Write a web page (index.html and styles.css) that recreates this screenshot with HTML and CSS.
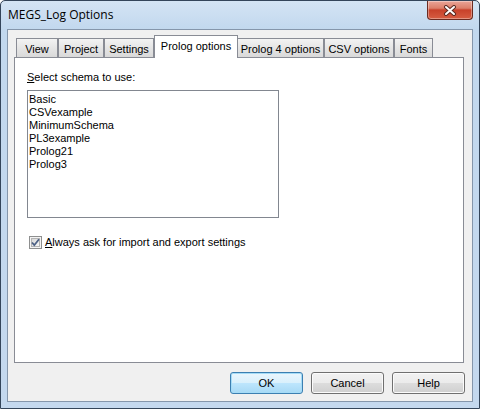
FILE: index.html
```html
<!DOCTYPE html>
<html lang="en">
<head>
  <meta charset="UTF-8">
  <title>MEGS_Log Options</title>
  <link rel="stylesheet" href="styles.css">
</head>
<body>

  <div class="window">
    <div class="titlebar">
      <span class="title">MEGS_Log Options</span>
      <div class="close-btn">
        <svg width="14" height="11" viewBox="0 0 14 11">
          <path d="M3 2 L11 9 M11 2 L3 9" stroke="#5a2a22" stroke-width="4" stroke-linecap="round"/>
          <path d="M3 2 L11 9 M11 2 L3 9" stroke="#ffffff" stroke-width="2" stroke-linecap="round"/>
        </svg>
      </div>
    </div>

    <div class="client">
      <div class="tabs">
        <div class="tab tab-view">View</div>
        <div class="tab tab-project">Project</div>
        <div class="tab tab-settings">Settings</div>
        <div class="tab tab-prolog active">Prolog options</div>
        <div class="tab tab-prolog4">Prolog 4 options</div>
        <div class="tab tab-csv">CSV options</div>
        <div class="tab tab-fonts">Fonts</div>
      </div>

      <div class="panel">
        <div class="label"><u>S</u>elect schema to use:</div>
        <div class="listbox">
          <div class="item">Basic</div>
          <div class="item">CSVexample</div>
          <div class="item">MinimumSchema</div>
          <div class="item">PL3example</div>
          <div class="item">Prolog21</div>
          <div class="item">Prolog3</div>
        </div>
        <div class="check-row">
          <svg class="checkbox" width="13" height="13" viewBox="0 0 13 13">
            <defs>
              <linearGradient id="cbfill" x1="0" y1="0" x2="1" y2="1">
                <stop offset="0" stop-color="#d6d6d6"/>
                <stop offset="1" stop-color="#f8f8f8"/>
              </linearGradient>
            </defs>
            <rect x="0.5" y="0.5" width="12" height="12" fill="#f4f4f4" stroke="#8e8f8f"/>
            <rect x="2.5" y="2.5" width="8" height="8" fill="url(#cbfill)" stroke="#b4b4b4"/>
            <path d="M3 6.5 L5.3 9.2 L10 3.2" fill="none" stroke="#4d6185" stroke-width="1.8"/>
          </svg>
          <span><u>A</u>lways ask for import and export settings</span>
        </div>
      </div>

      <div class="buttons">
        <div class="btn default">OK</div>
        <div class="btn">Cancel</div>
        <div class="btn">Help</div>
      </div>
    </div>
  </div>

</body>
</html>
```

FILE: styles.css
```css
* {
  box-sizing: border-box;
}

body {
  margin: 0;
  font-family: "Liberation Sans", Arial, sans-serif;
  font-size: 11px;
  color: #000;
}

.window {
  width: 480px;
  height: 409px;
  border: 1px solid #34455a;
  border-radius: 5px 5px 0 0;
  background: linear-gradient(to bottom, #d4e4f4 0%, #c2d8ee 28px, #c4d8ee 100%);
  padding: 0 6px 6px;
  display: flex;
  flex-direction: column;
}

.titlebar {
  height: 28px;
  display: flex;
  justify-content: space-between;
  align-items: flex-start;
}

.title {
  font-family: "Open Sans", "Noto Sans", sans-serif;
  font-size: 12px;
  line-height: 16px;
  padding: 6px 0 0 1px;
  color: #000;
}

.close-btn {
  width: 46px;
  height: 19px;
  border: 1px solid #6b2b21;
  border-top: none;
  border-radius: 0 0 4px 4px;
  background: linear-gradient(to bottom, #eaa598 0%, #dc7f6a 40%, #c8412a 50%, #d65d42 100%);
  box-shadow: inset 0 0 0 1px rgba(255, 255, 255, 0.35);
  display: flex;
  align-items: center;
  justify-content: center;
}

.client {
  flex: 1;
  border: 1px solid #8596ab;
  background: #f0f0f0;
  padding: 5px 7px 7px 6px;
  display: flex;
  flex-direction: column;
}

.tabs {
  height: 22px;
  display: flex;
  align-items: flex-end;
  padding-left: 2px;
}

.tab {
  height: 19px;
  line-height: 20px;
  text-align: center;
  border: 1px solid #898c95;
  border-bottom: none;
  background: linear-gradient(to bottom, #f3f3f3, #e4e4e4 55%, #d9d9d9);
  white-space: nowrap;
}

.tab.active {
  height: 23px;
  line-height: 21px;
  margin-bottom: -1px;
  margin-right: -1px;
  background: #fff;
  position: relative;
  z-index: 1;
}

.tab-view { width: 42px; }
.tab-project { width: 46px; }
.tab-settings { width: 50px; }
.tab-prolog { width: 84px; }
.tab-prolog4 { width: 87px; }
.tab-csv { width: 70px; }
.tab-fonts { width: 39px; }

.panel {
  width: 450px;
  height: 306px;
  border: 1px solid #898c95;
  background: #fff;
  padding: 13px 12px 0;
}

.label {
  line-height: 13px;
}

.listbox {
  width: 252px;
  height: 128px;
  margin-top: 6px;
  border: 1px solid #828790;
  padding: 2px 1px;
}

.item {
  line-height: 13px;
}

.check-row {
  margin-top: 18px;
  margin-left: 2px;
  height: 13px;
  line-height: 13px;
  display: flex;
  align-items: center;
  gap: 3px;
}

.checkbox {
  display: block;
}

.buttons {
  margin-top: 9px;
  display: flex;
  justify-content: flex-end;
  gap: 8px;
}

.btn {
  width: 73px;
  height: 22px;
  line-height: 20px;
  text-align: center;
  border: 1px solid #707070;
  border-radius: 3px;
  background: linear-gradient(to bottom, #f2f2f2 0%, #ebebeb 50%, #dddddd 50%, #cfcfcf 100%);
  box-shadow: inset 0 0 0 1px #fbfbfb;
}

.btn.default {
  border-color: #3c7fb1;
  background: linear-gradient(to bottom, #eaf6fd 0%, #d9f0fc 50%, #bee6fd 50%, #a7d9f5 100%);
  box-shadow: inset 0 0 0 1px #a5dcf7;
}
```
